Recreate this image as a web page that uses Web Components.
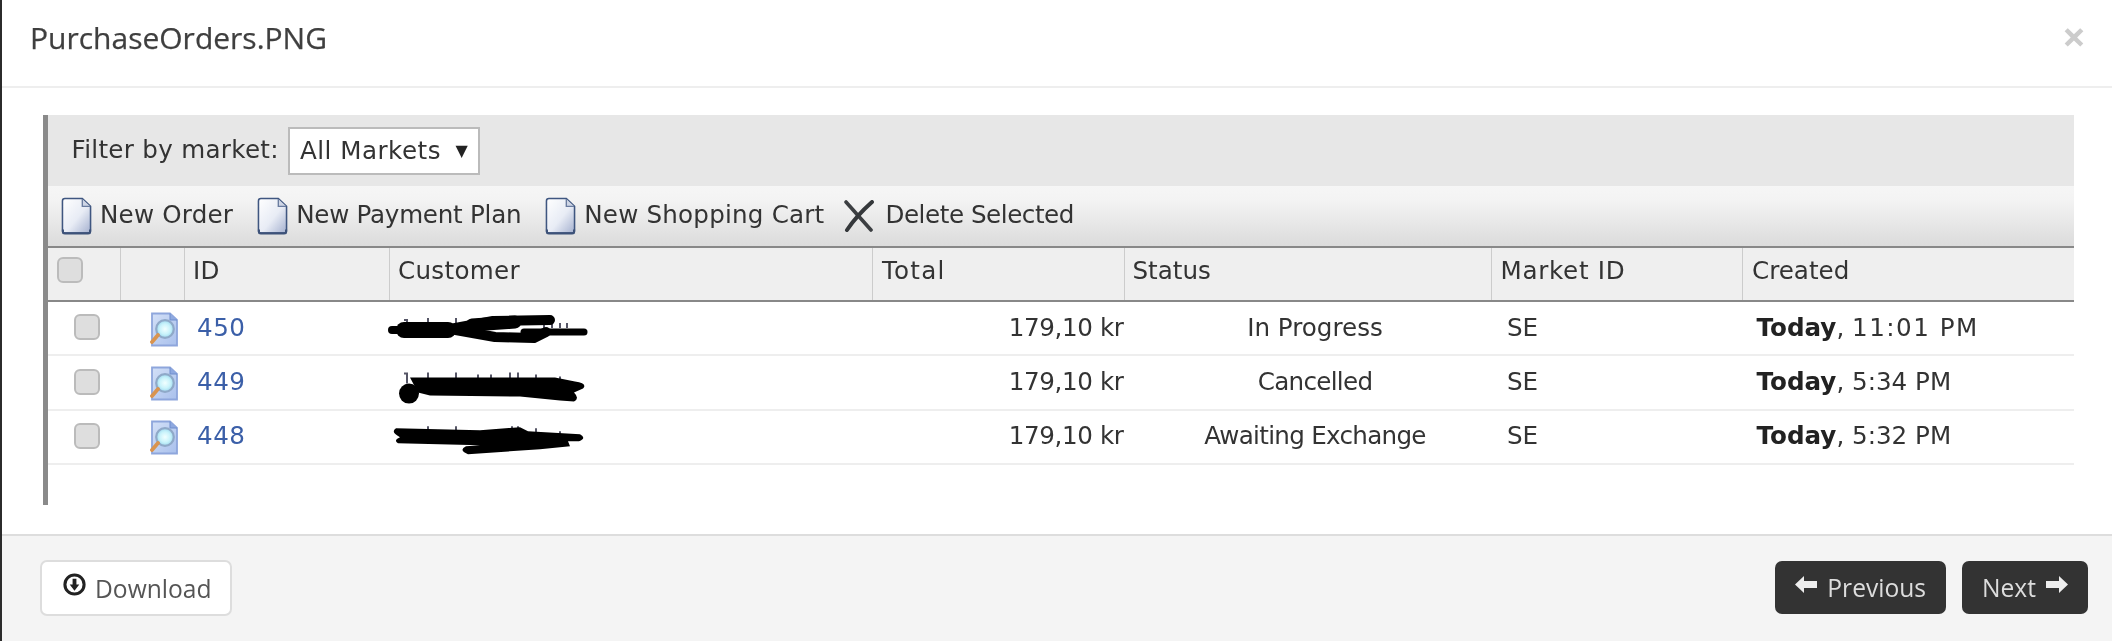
<!DOCTYPE html>
<html><head><meta charset="utf-8"><title>PurchaseOrders</title>
<style>html,body{margin:0;padding:0;background:#fff}body{width:2112px;height:641px;overflow:hidden}</style>
</head><body>
<po-modal title-text="PurchaseOrders.PNG">
  <po-grid>
    <po-filter slot="filter" label="Filter by market:" value="All Markets"></po-filter>
    <po-action slot="actions" icon="doc" style="letter-spacing:.2px">New Order</po-action>
    <po-action slot="actions" icon="doc" style="letter-spacing:-.26px">New Payment Plan</po-action>
    <po-action slot="actions" icon="doc" style="letter-spacing:.2px">New Shopping Cart</po-action>
    <po-action slot="actions" icon="x" style="letter-spacing:-.45px;margin-left:-4px;--gap:11px">Delete Selected</po-action>

    <po-row oid="450" total="179,10 kr" status="In Progress" market="SE" time="11:01 PM" time-ls="1.5" status-ls="0">
      <svg slot="customer" width="483" height="52" viewBox="390 302 483 52" style="display:block;overflow:visible">
        <g stroke="#556" stroke-width="2" fill="none"><path d="M404 320h3v6M428 318v6M456 318v6M544 323v5M552 323v5M560 323v5M567 323v5"/></g>
        <g stroke="#000" fill="none" stroke-linecap="round" stroke-linejoin="round"><path stroke-width="8" d="M392 330H404"/><path stroke-width="16" d="M404 330H448"/><path stroke-width="10" d="M450 329L493 321L550 320"/><path stroke-width="13" d="M472 325L515 322"/><path stroke-width="10" d="M450 329L495 337L534 338L546 332"/><path stroke-width="7" d="M524 332H584"/></g>
      </svg>
    </po-row>
    <po-row oid="449" total="179,10 kr" status="Cancelled" market="SE" time="5:34 PM" status-ls="-.7">
      <svg slot="customer" width="483" height="52" viewBox="390 356.4 483 52" style="display:block;overflow:visible">
        <g stroke="#556" stroke-width="2" fill="none"><path d="M404 373h3v10M428 372v6M456 372v6M478 374v5M491 374v5M510 372v6M518 372v6M536 374v5M560 376v4"/></g>
        <circle cx="409" cy="393" r="10" fill="#000"/>
        <path fill="#000" d="M410 377H555L575 381Q588 383 583 388L574 392Q580 398 574 401L560 400L520 396L430 395L418 392Z"/>
      </svg>
    </po-row>
    <po-row oid="448" total="179,10 kr" status="Awaiting Exchange" market="SE" time="5:32 PM" status-ls="-.7">
      <svg slot="customer" width="483" height="52" viewBox="390 410.8 483 52" style="display:block;overflow:visible">
        <g stroke="#556" stroke-width="2" fill="none"><path d="M428 426v4M456 426v4M512 426v4M518 426v4M536 428v4M560 431v4"/></g>
        <path fill="#000" d="M396 428L480 430L520 427L528 431L580 434Q587 438 579 441L568 441L570 446L540 449L468 454Q458 450 466 446L480 445L398 443Q393 440 400 437Q390 432 396 428Z"/>
      </svg>
    </po-row>
  </po-grid>
</po-modal>
<script>
const DOC = `<svg width="31" height="38" viewBox="0 0 32 38"><path d="M1.5 3.5Q1.5 1 4 1H22L30.5 9V34Q30.5 36.5 28 36.5H4Q1.5 36.5 1.5 34Z" fill="url(#docg2)" stroke="#3f5680" stroke-width="1.6"/><path d="M2 33V35.5Q2 37 4 37H28Q30 37 30 35.5V33" fill="none" stroke="#3d5279" stroke-width="2.2"/><path d="M22 1.5V9H30" fill="#cfd6e6" stroke="#6a7ca0" stroke-width="1.4"/><defs><linearGradient id="docg2" x1="0" y1="0" x2="1" y2="1"><stop offset="0" stop-color="#fff"/><stop offset=".55" stop-color="#e8ecf5"/><stop offset="1" stop-color="#a4b0cf"/></linearGradient></defs></svg>`;
const XICON = `<svg width="30" height="32" viewBox="0 0 30 32"><path d="M2 2C10 11 20 22 27 30" fill="none" stroke="#3c3f42" stroke-width="3.6" stroke-linecap="round"/><path d="M28 2C19 10 9 21 3 30" fill="none" stroke="#35383b" stroke-width="4" stroke-linecap="round"/></svg>`;
const VIEW = `<svg width="28" height="35" viewBox="0 0 28 35"><defs><linearGradient id="pg" x1="0" y1="0" x2="1" y2="1"><stop offset="0" stop-color="#d3e0f7"/><stop offset="1" stop-color="#a9c0ec"/></linearGradient><radialGradient id="ln"><stop offset="0" stop-color="#f2ffff"/><stop offset=".6" stop-color="#c9f3fb"/><stop offset="1" stop-color="#9fd9ee"/></radialGradient></defs><path d="M2 1.5H20L27 8V33.5H2Z" fill="url(#pg)" stroke="#8ea6dc" stroke-width="1.8"/><path d="M20 1.5V8H27" fill="#8ea9e0" stroke="#6f8dcc" stroke-width="1"/><circle cx="15" cy="17" r="8.8" fill="url(#ln)" stroke="#8fa9c8" stroke-width="2.2"/><path d="M8 23L2 30" stroke="#d9944f" stroke-width="3.8" stroke-linecap="round"/></svg>`;

class PoModal extends HTMLElement{
  constructor(){super();const s=this.attachShadow({mode:'open'});
  s.innerHTML=`<style>
  :host{display:flex;flex-direction:column;width:2112px;height:641px;box-sizing:border-box;border-left:2px solid #2b2b2b;background:#fff;font-family:"Open Sans",sans-serif;filter:blur(.4px)}
  header{flex:none;display:flex;align-items:center;justify-content:space-between;padding:0 26px 0 28px;box-sizing:border-box;border-bottom:2px solid #eee;height:88px}
  h1{margin:0 0 10px;font-size:30px;font-weight:400;color:#3f3f3f;line-height:40px;-webkit-text-stroke:.25px #3f3f3f}
  .close{font:700 42px/1 "Open Sans",sans-serif;color:#ccc;margin-bottom:14px}
  main{flex:1;padding:27px 38px 29px 41px;min-height:0;display:flex}
  footer{flex:none;height:107px;box-sizing:border-box;border-top:2px solid #ddd;background:#f4f4f4;display:flex;align-items:center;justify-content:space-between;padding:0 24px 3px 38px}
  .nav{display:flex;gap:16px}
  po-button[kind=light]{margin-top:2px}
  </style>
  <header><h1></h1><span class="close">×</span></header>
  <main><slot></slot></main>
  <footer><po-button kind="light" icon="down">Download</po-button><div class="nav"><po-button kind="dark" icon="left">Previous</po-button><po-button kind="dark" icon="right">Next</po-button></div></footer>`;
  s.querySelector('h1').textContent=this.getAttribute('title-text');}
}
class PoButton extends HTMLElement{
  constructor(){super();const s=this.attachShadow({mode:'open'});
  const k=this.getAttribute('kind'),ic=this.getAttribute('icon');
  const icons={
   down:`<svg width="23" height="23" viewBox="0 0 24 24" style="margin-top:-7px"><circle cx="12" cy="12" r="10" fill="none" stroke="#222" stroke-width="3.2"/><path d="M10 6H14V12H17L12 18.5L7 12H10Z" fill="#222"/></svg>`,
   left:`<svg width="23" height="17" viewBox="0 0 23 17" style="margin-top:-5px"><path d="M0 8.5L9 0V5H22V12H9V17Z" fill="#eee"/></svg>`,
   right:`<svg width="23" height="17" viewBox="0 0 23 17" style="margin-top:-5px"><path d="M23 8.5L14 0V5H1V12H14V17Z" fill="#eee"/></svg>`};
  s.innerHTML=`<style>
  :host{display:inline-flex;align-items:center;box-sizing:border-box;font:400 24.6px/32px "Open Sans",sans-serif;border-radius:7px;height:${k==='dark'?53:56}px;gap:9px}
  :host([kind=light]){background:#fff;border:2px solid #ddd;color:#555;padding:0 0 0 21px;width:192px}
  :host([kind=dark]){background:#333;color:#ddd;padding:0 20px}
  .t{padding-top:2px}
  </style>${ic==='right'?'<span class="t"><slot></slot></span>'+icons[ic]:icons[ic]+'<span class="t"><slot></slot></span>'}`;}
}
class PoFilter extends HTMLElement{
  constructor(){super();const s=this.attachShadow({mode:'open'});
  s.innerHTML=`<style>
  :host{display:flex;align-items:center;font:400 24.6px/30px "DejaVu Sans",sans-serif;color:#333;gap:9px}
  .l{letter-spacing:.3px;padding-bottom:2px}
  .sel{display:flex;align-items:center;justify-content:space-between;box-sizing:border-box;width:192px;height:48px;background:#fff;border:2px solid #bbb;padding:0 10px 0 10px;color:#333;white-space:nowrap}
  .v{letter-spacing:.5px}
  .arr{font-size:16px;color:#222}
  </style><span class="l"></span><span class="sel"><span class="v"></span><span class="arr">▼</span></span>`;
  s.querySelector('.l').textContent=this.getAttribute('label');
  s.querySelector('.v').textContent=this.getAttribute('value');}
}
class PoAction extends HTMLElement{
  constructor(){super();const s=this.attachShadow({mode:'open'});
  s.innerHTML=`<style>
  :host{display:inline-flex;align-items:center;gap:var(--gap,8px);font:400 24.6px/30px "DejaVu Sans",sans-serif;color:#333;white-space:nowrap}
  svg{display:block}
  span{padding-bottom:2px}
  </style>${this.getAttribute('icon')==='x'?XICON:DOC}<span><slot></slot></span>`;}
}
const COLS='73px 64px 205px 483px 251.5px 367px 251.5px 331px';
class PoGrid extends HTMLElement{
  constructor(){super();const s=this.attachShadow({mode:'open'});
  const heads=[['',0,8.5],['',0,8],['ID',.3,8],['Customer',.3,8],['Total',1.2,9],['Status',0,8],['Market ID',.7,9],['Created',0,9]];
  s.innerHTML=`<style>
  :host{display:block;box-sizing:border-box;width:2031px;height:390px;border-left:5px solid #8a8a8a;flex:none;
    font:400 24.6px/30px "DejaVu Sans",sans-serif;color:#333}
  .filter{height:71px;background:#e7e7e7;box-sizing:border-box;padding:12px 0 0 23.5px}
  .actions{height:60px;box-sizing:border-box;padding:0 0 0 13px;background:linear-gradient(#f6f6f6 0,#f3f3f3 25%,#e0e0e0 85%,#dcdcdc 100%);display:flex;align-items:center;gap:24px}
  .head{display:grid;grid-template-columns:${COLS};height:56px;box-sizing:border-box;background:#efefef;border-top:2px solid #888;border-bottom:2px solid #888}
  .head>div{border-right:1.5px solid #ccc;padding-bottom:6px;display:flex;align-items:center;box-sizing:border-box;color:#333}
  .head>div:last-child{border-right:0}
  .cb{width:26px;height:26px;box-sizing:border-box;background:#dedede;border:2px solid #bbb;border-radius:6px;margin-top:-2px}
  </style>
  <div class="filter"><slot name="filter"></slot></div>
  <div class="actions"><slot name="actions"></slot></div>
  <div class="head">${heads.map(([h,l,p],i)=>`<div style="letter-spacing:${l}px;padding-left:${p}px">${i===0?'<span class="cb"></span>':h}</div>`).join('')}</div>
  <slot></slot>`;}
}
class PoRow extends HTMLElement{
  constructor(){super();const s=this.attachShadow({mode:'open'});
  const a=n=>this.getAttribute(n);
  s.innerHTML=`<style>
  :host{display:grid;grid-template-columns:${COLS};height:54.4px;box-sizing:border-box;border-bottom:2px solid #eee;align-items:center;color:#333;font:400 24.6px/30px "DejaVu Sans",sans-serif}
  div{padding-bottom:1px;white-space:nowrap;box-sizing:border-box}
  .cb{width:26px;height:26px;box-sizing:border-box;background:#dedede;border:2px solid #bbb;border-radius:6px;margin-left:25.5px;margin-bottom:2px}
  .ic{padding:2px 0 0 28.5px;display:block}.ic svg{display:block}
  a{color:#3b5fa8;text-decoration:none;padding-left:12px;letter-spacing:.5px}
  .tot{text-align:right;padding-right:1px;letter-spacing:-.4px}
  .st{text-align:center;padding-left:14px}
  .mk{padding-left:15.5px}.cr{padding-left:13.5px}
  b{font-weight:700;color:#222}
  .cu{padding:0}
  </style>
  <span class="cb"></span><div class="ic">${VIEW}</div><div><a>${a('oid')}</a></div><div class="cu"><slot name="customer"></slot></div>
  <div class="tot">${a('total')}</div><div class="st" style="letter-spacing:${a('status-ls')||0}px">${a('status')}</div><div class="mk">${a('market')}</div><div class="cr"><b>Today</b>, <span style="letter-spacing:${a('time-ls')||0}px">${a('time')}</span></div>`;}
}
customElements.define('po-button',PoButton);
customElements.define('po-filter',PoFilter);
customElements.define('po-action',PoAction);
customElements.define('po-grid',PoGrid);
customElements.define('po-row',PoRow);
customElements.define('po-modal',PoModal);
</script>
</body></html>
